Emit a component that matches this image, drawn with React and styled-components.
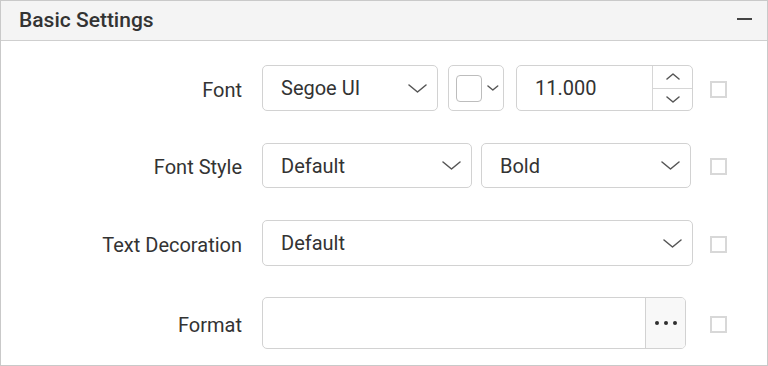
import React from "react";
import styled, { createGlobalStyle } from "styled-components";

const GlobalStyle = createGlobalStyle`
  html, body {
    margin: 0;
    padding: 0;
    background: #ffffff;
  }
  * {
    box-sizing: border-box;
  }
`;

const Chevron = ({ w = 19, h = 9, up = false }) => (
  <svg width={w} height={h} viewBox={`0 0 ${w} ${h}`} fill="none">
    <path
      d={up ? `M1 ${h - 1} L${w / 2} 1 L${w - 1} ${h - 1}` : `M1 1 L${w / 2} ${h - 1} L${w - 1} 1`}
      stroke="#555"
      strokeWidth="1.5"
      strokeLinecap="round"
      strokeLinejoin="round"
    />
  </svg>
);

const App = () => {
  return (
    <>
      <GlobalStyle />
      <Panel>
        <Header>
          <Title>Basic Settings</Title>
          <Collapse />
        </Header>
        <Body>
          <Row $h={46}>
            <Label>Font</Label>
            <Controls>
              <Select $w={176}>
                <span>Segoe UI</span>
                <Chevron />
              </Select>
              <ColorPicker>
                <Swatch />
                <Chevron w={12} h={6} />
              </ColorPicker>
              <Numeric>
                <NumValue>11.000</NumValue>
                <Spin>
                  <SpinBtn>
                    <Chevron w={14} h={7} up />
                  </SpinBtn>
                  <SpinBtn>
                    <Chevron w={14} h={7} />
                  </SpinBtn>
                </Spin>
              </Numeric>
            </Controls>
            <Check />
          </Row>
          <Row $h={45}>
            <Label>Font Style</Label>
            <Controls $gap={9}>
              <Select $w={210}>
                <span>Default</span>
                <Chevron />
              </Select>
              <Select $w={210}>
                <span>Bold</span>
                <Chevron />
              </Select>
            </Controls>
            <Check />
          </Row>
          <Row $h={46}>
            <Label>Text Decoration</Label>
            <Controls>
              <Select $w={431}>
                <span>Default</span>
                <Chevron />
              </Select>
            </Controls>
            <Check />
          </Row>
          <Row $h={52} $shift={-1}>
            <Label>Format</Label>
            <Controls>
              <FormatBox>
                <FormatInput />
                <MoreBtn>
                  <Dot />
                  <Dot />
                  <Dot />
                </MoreBtn>
              </FormatBox>
            </Controls>
            <Check />
          </Row>
        </Body>
      </Panel>
    </>
  );
};

const Panel = styled.div`
  width: 768px;
  height: 366px;
  border: 1px solid #c9c9c9;
  background: #fff;
  font-family: Roboto, "Liberation Sans", sans-serif;
  color: #333;
  overflow: hidden;
`;

const Header = styled.div`
  height: 40px;
  background: #f4f4f4;
  border-bottom: 1px solid #cfcfcf;
  display: flex;
  align-items: center;
  justify-content: space-between;
  padding: 0 15px 0 18px;
`;

const Title = styled.div`
  font-size: 21px;
  font-weight: 500;
  color: #333;
  margin-top: -1px;
`;

const Collapse = styled.div`
  width: 15px;
  height: 2px;
  background: #444;
  margin-top: -3px;
`;

const Body = styled.div`
  display: flex;
  flex-direction: column;
  gap: 32px;
  padding-top: 24px;
`;

const Row = styled.div`
  display: flex;
  align-items: center;
  height: ${(p) => p.$h}px;
  margin-top: ${(p) => p.$shift || 0}px;
`;

const Label = styled.div`
  width: 241px;
  text-align: right;
  font-size: 20px;
  color: #333;
  margin-right: 20px;
  margin-top: 3px;
`;

const Controls = styled.div`
  width: 431px;
  height: 100%;
  display: flex;
  gap: ${(p) => p.$gap || 10}px;
`;

const Select = styled.div`
  width: ${(p) => p.$w}px;
  height: 100%;
  border: 1px solid #d2d2d2;
  border-radius: 5px;
  display: flex;
  align-items: center;
  justify-content: space-between;
  padding: 0 10px 0 18px;
  font-size: 20px;
  color: #333;
`;

const ColorPicker = styled.div`
  width: 56px;
  height: 100%;
  border: 1px solid #d2d2d2;
  border-radius: 5px;
  display: flex;
  align-items: center;
  padding: 0 4px 0 7px;
  gap: 5px;
  margin-right: 2px;
`;

const Swatch = styled.div`
  width: 27px;
  height: 27px;
  border: 1.5px solid #bdbdbd;
  border-radius: 4px;
  background: #fff;
`;

const Numeric = styled.div`
  width: 177px;
  height: 100%;
  border: 1px solid #d2d2d2;
  border-radius: 5px;
  display: flex;
`;

const NumValue = styled.div`
  flex: 1;
  display: flex;
  align-items: center;
  padding-left: 18px;
  font-size: 20px;
  color: #333;
`;

const Spin = styled.div`
  width: 40px;
  border-left: 1px solid #d6d6d6;
  display: flex;
  flex-direction: column;
`;

const SpinBtn = styled.div`
  flex: 1;
  display: flex;
  align-items: center;
  justify-content: center;
  & + & {
    border-top: 1px solid #d6d6d6;
  }
`;

const Check = styled.div`
  width: 17px;
  height: 17px;
  border: 2px solid #d8d8d8;
  margin-left: 17px;
  margin-top: 2px;
`;

const FormatBox = styled.div`
  width: 424px;
  height: 100%;
  border: 1px solid #d2d2d2;
  border-radius: 5px;
  display: flex;
  overflow: hidden;
`;

const FormatInput = styled.div`
  flex: 1;
`;

const MoreBtn = styled.div`
  width: 40px;
  border-left: 1px solid #d2d2d2;
  background: #f8f8f8;
  display: flex;
  align-items: center;
  justify-content: center;
  gap: 5px;
`;

const Dot = styled.span`
  width: 4px;
  height: 4px;
  border-radius: 50%;
  background: #2f2f2f;
`;

export default App;
